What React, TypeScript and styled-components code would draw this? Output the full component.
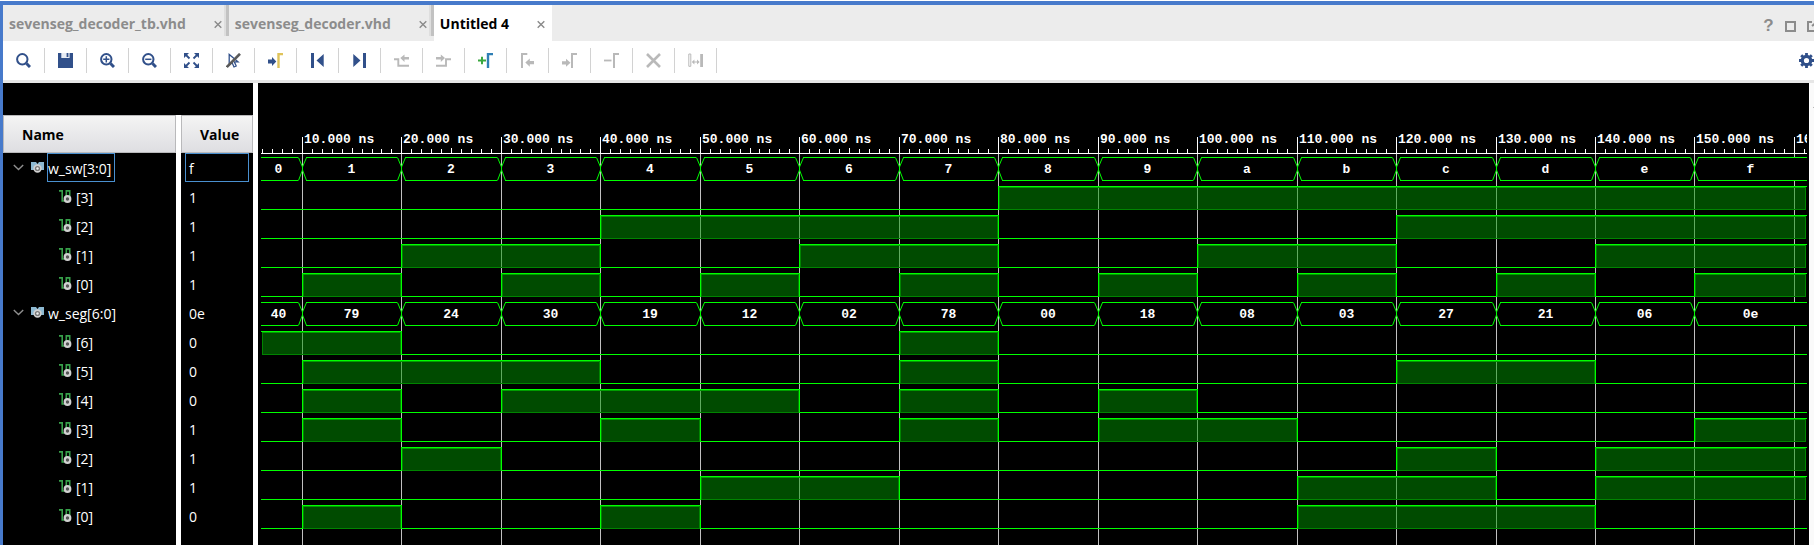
import React, { useLayoutEffect, useRef, useState } from "react";
import styled, { createGlobalStyle } from "styled-components";

const ui = `"Open Sans", "Noto Sans", sans-serif`;
const mono = `"Liberation Mono", monospace`;
const NAVY = "#31508a";
const GREY = "#b9b9b9";

const Global = createGlobalStyle`
  * { box-sizing: border-box; }
  body { margin: 0; background: #fff; font-family: ${ui}; font-size: 14px; }
  button { font: inherit; color: inherit; background: none; border: 0; padding: 0; }
`;

const Window = styled.div`
  display: flex;
  flex-direction: column;
  min-height: 100vh;
  overflow: hidden;
  border-top: 1px solid #fff;
`;
const Frame = styled.div`
  flex: 1;
  display: flex;
  flex-direction: column;
  border-top: 4px solid #477acb;
  border-left: 3px solid #477acb;
`;
const TabBar = styled.div`
  display: flex;
  height: 36px;
  background: #ececec;
  overflow: hidden;
`;
const Tab = styled.div<{ $active?: boolean }>`
  display: flex;
  align-items: center;
  gap: 28px;
  padding-left: 6px;
  background: ${(p) => (p.$active ? "#fff" : "#ececec")};
  color: ${(p) => (p.$active ? "#000" : "#8c8c8c")};
`;
const TabLabel = styled.button`
  font-weight: 700;
  font-size: 14px;
  line-height: 20px;
  padding-top: 2px;
  white-space: nowrap;
`;
const TabEnd = styled.div`
  display: flex;
  align-items: center;
  align-self: stretch;
  gap: 2px;
`;
const IconButton = styled.button`
  display: flex;
  align-items: center;
  justify-content: center;
`;
const CloseButton = styled(IconButton)`
  padding-top: 2px;
`;
const TabDivider = styled.span<{ $hidden?: boolean }>`
  width: 5px;
  height: 31px;
  align-self: flex-start;
  border-left: 2px solid #dedede;
  background: #c2c2c2;
  background-clip: padding-box;
  visibility: ${(p) => (p.$hidden ? "hidden" : "visible")};
`;
const WindowControls = styled.div`
  display: flex;
  align-items: center;
  gap: 11px;
  margin: 6px -4px 0 auto;
  color: #8c8c8c;
`;
const HelpButton = styled(IconButton)`
  font-family: "Liberation Sans", sans-serif;
  font-weight: 700;
  font-size: 17px;
  line-height: 20px;
  width: 11px;
`;
const ToolBar = styled.div`
  display: flex;
  align-items: center;
  height: 42px;
  border-bottom: 3px solid #e6e6e6;
  background: #fff;
`;
const Tool = styled(IconButton)`
  width: 42px;
  height: 25px;
  border-right: 1px solid #d2d2d2;
`;
const SettingsTool = styled(IconButton)`
  margin-left: auto;
`;
const Body = styled.div`
  flex: 1;
  display: flex;
  background: #fff;
`;
const SignalPane = styled.div`
  width: 250px;
  flex: none;
  padding-top: 32px;
  background: #000;
  display: flex;
`;
const SignalTable = styled.table`
  width: 250px;
  height: 100%;
  table-layout: fixed;
  border-spacing: 0;
  color: #fff;
`;
const HeadCell = styled.th<{ $first?: boolean }>`
  height: 38px;
  padding: 0;
  color: #000;
  font-weight: 700;
  text-align: left;
  width: ${(p) => (p.$first ? "178px" : "72px")};
  border-right: ${(p) => (p.$first ? "5px solid #fff" : "0")};
`;
const HeadFace = styled.div`
  height: 38px;
  line-height: 37px;
  border: 1px solid #b9b9bb;
  background: linear-gradient(#f4f4f4, #dedee2);
  padding-left: 18px;
`;
const Cell = styled.td<{ $first?: boolean }>`
  height: 29px;
  padding: 0;
  border-right: ${(p) => (p.$first ? "5px solid #fff" : "0")};
`;
const FillCell = styled(Cell)`
  height: auto;
`;
const NameRow = styled.div<{ $child?: boolean }>`
  display: flex;
  align-items: center;
  gap: 3px;
  padding-left: ${(p) => (p.$child ? "56px" : "10px")};
`;
const Expander = styled(IconButton)`
  margin-right: 4px;
`;
const Text = styled.span<{ $selected?: boolean }>`
  height: 29px;
  line-height: 29px;
  padding-right: 3px;
  border: 1px solid ${(p) => (p.$selected ? "#4a90d0" : "transparent")};
`;
const ValueText = styled(Text)`
  display: block;
  margin: 0 4px;
  padding-left: 3px;
`;
const WavePane = styled.div`
  flex: 1;
  min-width: 0;
  margin-left: 5px;
  padding: 0 2px 0 3px;
  background: #000;
  display: flex;
  overflow: hidden;
`;
const WaveSvg = styled.svg`
  flex: 1;
  width: 100%;
  min-width: 0;
  min-height: 447px;
  text {
    font: 700 13px ${mono};
    fill: #fff;
  }
`;
const ScrollTrack = styled.div`
  width: 5px;
  flex: none;
  overflow: hidden;
  padding: 10px 0 0 3px;
  background: #fafafa;
  border-left: 1px solid #fff;
`;

/* ---------- icons ---------- */
const Ico = ({ children, w = 15, h = 15 }: { children: React.ReactNode; w?: number; h?: number }) => (
  <svg width={w} height={h} viewBox={`0 0 ${w} ${h}`} fill="none" aria-hidden="true">
    {children}
  </svg>
);
const Lens = ({ mark }: { mark?: string }) => (
  <Ico>
    <circle cx="6.3" cy="6.3" r="5.2" stroke={NAVY} strokeWidth="2" />
    <path d="M10.5 10.5L14 14" stroke={NAVY} strokeWidth="3" />
    {mark && <path d={mark} stroke={NAVY} strokeWidth="1.5" />}
  </Ico>
);

const tools: { label: string; icon: React.ReactNode; off?: boolean }[] = [
  { label: "Search", icon: <Lens /> },
  {
    label: "Save",
    icon: (
      <Ico>
        <path d="M0 0H15V15H0Z" fill={NAVY} />
        <path d="M3.3 0H11.6V5H3.3Z" fill="#e8ecf3" />
        <path d="M8.6 0H10.4V4H8.6Z" fill={NAVY} />
      </Ico>
    ),
  },
  { label: "Zoom in", icon: <Lens mark="M3.2 6.3H9.4M6.3 3.2V9.4" /> },
  { label: "Zoom out", icon: <Lens mark="M3.2 6.3H9.4" /> },
  {
    label: "Zoom fit",
    icon: (
      <Ico>
        <path d="M0 0H5L0 5ZM15 0V5L10 0ZM0 15V10L5 15ZM15 15H10L15 10Z" fill={NAVY} />
        <path d="M1 1L5.5 5.5M14 1L9.5 5.5M1 14L5.5 9.5M14 14L9.5 9.5" stroke={NAVY} strokeWidth="1.8" />
      </Ico>
    ),
  },
  {
    label: "Selection off",
    icon: (
      <Ico>
        <path d="M3.2 1.5V12L6 9.6L8 14L10.2 13L8.3 8.8H12Z" stroke={NAVY} strokeWidth="1.3" />
        <path d="M0.8 14L14 0.8" stroke="#5a5a5a" strokeWidth="2.6" />
      </Ico>
    ),
  },
  {
    label: "Go to cursor",
    icon: <Ico><path d="M0 6.5H4V4L8.3 8.5L4 13V10.5H0Z" fill={NAVY} /><path d="M10.5 15V1H15" stroke="#dfc35a" strokeWidth="2.4" /></Ico>,
  },
  { label: "Go to start", icon: <Ico><path d="M1 0H4V15H1ZM13.7 1V14L6.5 7.5Z" fill={NAVY} /></Ico> },
  { label: "Go to end", icon: <Ico><path d="M11 0H14V15H11ZM1.3 1V14L8.5 7.5Z" fill={NAVY} /></Ico> },
  {
    label: "Previous transition", off: true,
    icon: <Ico><path d="M0 6.3H4.3V12.8H15" stroke={GREY} strokeWidth="1.9" /><path d="M6.3 5L10.5 1.4V4H15V6.4H10.5V9Z" fill={GREY} /></Ico>,
  },
  {
    label: "Next transition", off: true,
    icon: <Ico><path d="M0 12.8H10V6.3H15" stroke={GREY} strokeWidth="1.9" /><path d="M9 5L4.8 1.4V4H0V6.4H4.8V9Z" fill={GREY} /></Ico>,
  },
  {
    label: "Add marker",
    icon: <Ico><path d="M0 7.5H8M4 3.7V11.3" stroke="#3aa83f" strokeWidth="2" /><path d="M10 15V1H15" stroke="#2f7fb5" strokeWidth="2.4" /></Ico>,
  },
  {
    label: "Previous marker", off: true,
    icon: <Ico><path d="M2 15V1H7.3" stroke={GREY} strokeWidth="2" /><path d="M5.3 9.6L9.8 5.5V8H14V11.2H9.8V13.7Z" fill={GREY} /></Ico>,
  },
  {
    label: "Next marker", off: true,
    icon: <Ico><path d="M10 15V1H15" stroke={GREY} strokeWidth="2" /><path d="M8.5 9.8L4 5.8V8.2H0V11.4H4V13.8Z" fill={GREY} /></Ico>,
  },
  {
    label: "Delete marker", off: true,
    icon: <Ico><path d="M0 7.5H7.5" stroke={GREY} strokeWidth="1.8" /><path d="M10 15V1H15" stroke={GREY} strokeWidth="2" /></Ico>,
  },
  { label: "Remove", off: true, icon: <Ico><path d="M1 1L14 14M14 1L1 14" stroke={GREY} strokeWidth="2.6" /></Ico> },
  {
    label: "Swap markers", off: true,
    icon: (
      <Ico>
        <path d="M0.8 1H2.8V13.3H0.8Z" stroke={GREY} />
        <path d="M12.2 1H15V14H12.2ZM3.8 9L6.4 6.6V8.5H9V6.6L11.6 9L9 11.4V9.5H6.4V11.4Z" fill={GREY} />
      </Ico>
    ),
  },
];

const CloseIcon = () => (
  <Ico w={8} h={9}><path d="M0.7 1.2L7.3 7.8M7.3 1.2L0.7 7.8" stroke="#8a8a8a" strokeWidth="1.4" /></Ico>
);
const Gear = () => (
  <Ico>
    <circle cx="7.5" cy="7.5" r="4.2" stroke={NAVY} strokeWidth="3.2" />
    {[0, 45, 90, 135].map((a) => (
      <path key={a} d="M7.5 0V3M7.5 12V15" stroke={NAVY} strokeWidth="2.8" transform={`rotate(${a} 7.5 7.5)`} />
    ))}
  </Ico>
);
const Chevron = () => (
  <Ico w={11} h={7}><path d="M0.8 1L5.5 5.6L10.2 1" stroke="#8f8f8f" strokeWidth="1.4" /></Ico>
);
const BusIcon = () => (
  <Ico w={13} h={13}>
    <path d="M0 1H5L6.5 3L8 1H13V9H0Z" fill="#8db9d2" />
    <circle cx="6.5" cy="7.5" r="3.4" fill="#777" stroke="#d0d0d0" strokeWidth="1.6" />
    <circle cx="6.5" cy="7.5" r="1.2" fill="#efefef" />
  </Ico>
);
const BitIcon = () => (
  <Ico w={13} h={13}>
    <path d="M0 0.9H3.2V11H5.5M7.3 7V0.9H10.7V6" stroke="#37a04a" strokeWidth="1.6" />
    <circle cx="8.5" cy="9" r="2.8" fill="#555" stroke="#d2d2d2" strokeWidth="2.2" />
  </Ico>
);

/* ---------- signals ---------- */
type Signal = { name: string; value: string; bus?: boolean; samples: number[] };
const sw = Array.from({ length: 16 }, (_, i) => i);
const seg = [0x40, 0x79, 0x24, 0x30, 0x19, 0x12, 0x02, 0x78, 0x00, 0x18, 0x08, 0x03, 0x27, 0x21, 0x06, 0x0e];

const bits = (samples: number[], count: number): Signal[] =>
  Array.from({ length: count }, (_, i) => {
    const bit = count - 1 - i;
    const values = samples.map((v) => (v >> bit) & 1);
    return { name: `[${bit}]`, value: String(values[values.length - 1]), samples: values };
  });

const signals: Signal[] = [
  { name: "w_sw[3:0]", value: "f", bus: true, samples: sw },
  ...bits(sw, 4),
  { name: "w_seg[6:0]", value: "0e", bus: true, samples: seg },
  ...bits(seg, 7),
];

/* ---------- waveform ---------- */
const ORIGIN = -58.07; // x of 0 ns, left of the visible range
const STEP = 99.47; // pixels per 10 ns
const TOP = 70;
const ROW = 29;
const edge = (i: number) => Math.floor(ORIGIN + i * STEP);

function BusWave({ signal, y, width }: { signal: Signal; y: number; width: number }) {
  const digits = signal.value.length;
  const top = y + 4;
  const bottom = y + 27;
  return (
    <g>
      {signal.samples.map((v, i) => {
        const first = i === 0;
        const last = i === signal.samples.length - 1;
        const a = first ? -6 : edge(i);
        const b = last ? width : edge(i + 1);
        const x1 = first ? 0 : a + 4;
        const x2 = last ? b : b - 4;
        const from = first ? 0 : a + 1;
        return (
          <g key={i}>
            <rect x={from} y={top} width={Math.max(0, b - from)} height="24" fill="#000" />
            <path d={`M${x1} ${top + 0.5}H${x2}M${x1} ${bottom + 0.5}H${x2}`} stroke="#0f0" />
            <text x={(a + b) / 2} y={y + 20} textAnchor="middle">
              {v.toString(16).padStart(digits, "0")}
            </text>
          </g>
        );
      })}
      {signal.samples.slice(1).map((_, i) => {
        const x = edge(i + 1) + 0.5;
        return (
          <path
            key={i}
            d={`M${x - 4} ${top + 0.5}L${x} ${top + 10}V${top + 13}L${x + 4} ${bottom + 0.5}M${x + 4} ${top + 0.5}L${x} ${top + 10}M${x} ${top + 13}L${x - 4} ${bottom + 0.5}`}
            stroke="#0f0"
            fill="none"
          />
        );
      })}
    </g>
  );
}

function BitWave({ signal, y, width }: { signal: Signal; y: number; width: number }) {
  const hi = y + 4.5;
  const lo = y + 27.5;
  const runs: { v: number; a: number; b: number; start: number }[] = [];
  signal.samples.forEach((v, i) => {
    const b = i === signal.samples.length - 1 ? width : edge(i + 1);
    const prev = runs[runs.length - 1];
    if (prev && prev.v === v) prev.b = b;
    else runs.push({ v, a: i === 0 ? 0 : edge(i), b, start: i });
  });
  return (
    <g shapeRendering="crispEdges">
      {runs.map((r) => {
        const end = r.b === width ? width - 2 : r.b - 1;
        const begin = r.start === 0 ? 1 : r.a + 1;
        const span = Math.max(0, end - begin);
        return (
          <g key={r.start}>
            {r.v === 1 && (
              <>
                <rect x={begin} y={y + 5} width={span} height="23" fill="rgba(0,150,0,.5)" />
                <rect x={begin + 0.5} y={y + 5.5} width={span} height="22" fill="none" stroke="#008400" />
                <path d={`M${begin} ${y + 5.5}H${end}`} stroke="#009e00" />
              </>
            )}
            <path d={`M${r.a} ${r.v ? hi : lo}H${r.b}`} stroke="#0f0" />
            {r.start > 0 && <path d={`M${r.a + 0.5} ${y + 4}V${y + 28}`} stroke="#0f0" />}
          </g>
        );
      })}
    </g>
  );
}

function Waveform() {
  const ref = useRef<HTMLDivElement>(null);
  const [width, setWidth] = useState(1200);
  useLayoutEffect(() => {
    const el = ref.current;
    if (!el) return;
    const measure = () => setWidth(Math.max(0, el.clientWidth - 5));
    measure();
    const watcher = new ResizeObserver(measure);
    watcher.observe(el);
    return () => watcher.disconnect();
  }, []);

  const ticks: number[] = [];
  for (let n = 6; ORIGIN + (n * STEP) / 10 < width; n++) ticks.push(n);
  const majors = ticks.filter((n) => n % 10 === 0);

  return (
    <WavePane ref={ref}>
      <WaveSvg role="img" aria-label="Waveform">
        <g shapeRendering="crispEdges">
          {majors.map((n) => {
            const x = edge(n / 10) + 0.5;
            return (
              <g key={n}>
                <line x1={x} x2={x} y1={TOP} y2="100%" stroke="#c0c0c0" />
                <line x1={x} x2={x} y1={TOP - 16} y2={TOP} stroke="#fff" />
              </g>
            );
          })}
          {ticks.filter((n) => n % 10).map((n) => {
            const x = Math.floor(ORIGIN + (n * STEP) / 10) + 0.5;
            return <line key={n} x1={x} x2={x} y1={TOP - (n % 5 ? 4 : 5)} y2={TOP} stroke="#fff" />;
          })}
          <line x1="0" x2={width} y1={TOP + 0.5} y2={TOP + 0.5} stroke="#fff" />
        </g>
        {majors.map((n) => (
          <text key={n} x={edge(n / 10) + 2} y={TOP - 10}>{`${n}.000 ns`}</text>
        ))}
        {signals.map((s, i) =>
          s.bus ? (
            <BusWave key={i} signal={s} y={TOP + i * ROW} width={width} />
          ) : (
            <BitWave key={i} signal={s} y={TOP + i * ROW} width={width} />
          )
        )}
      </WaveSvg>
    </WavePane>
  );
}

const tabs = ["sevenseg_decoder_tb.vhd", "sevenseg_decoder.vhd", "Untitled 4"];

export default function App() {
  return (
    <Window>
      <Global />
      <Frame>
        <TabBar>
          {tabs.map((t, i) => (
            <Tab key={t} $active={i === 2}>
              <TabLabel>{t}</TabLabel>
              <TabEnd>
                <CloseButton aria-label={`Close ${t}`}><CloseIcon /></CloseButton>
                <TabDivider $hidden={i === 2} />
              </TabEnd>
            </Tab>
          ))}
          <WindowControls>
            <HelpButton aria-label="Help">?</HelpButton>
            <IconButton aria-label="Maximize">
              <Ico w={11} h={11}><path d="M1 1H10V10H1Z" stroke="#8c8c8c" strokeWidth="2" /></Ico>
            </IconButton>
            <IconButton aria-label="Float">
              <Ico w={11} h={11}><path d="M5 1H1V10H10V7M5 5L10 1" stroke="#8c8c8c" strokeWidth="2" /></Ico>
            </IconButton>
          </WindowControls>
        </TabBar>
        <ToolBar>
          {tools.map((t) => (
            <Tool key={t.label} aria-label={t.label} disabled={t.off}>{t.icon}</Tool>
          ))}
          <SettingsTool aria-label="Settings"><Gear /></SettingsTool>
        </ToolBar>
        <Body>
          <SignalPane>
            <SignalTable>
              <thead>
                <tr>
                  <HeadCell $first><HeadFace>Name</HeadFace></HeadCell>
                  <HeadCell><HeadFace>Value</HeadFace></HeadCell>
                </tr>
              </thead>
              <tbody>
                {signals.map((s, i) => (
                  <tr key={i}>
                    <Cell $first>
                      <NameRow $child={!s.bus}>
                        {s.bus && <Expander aria-label={`Collapse ${s.name}`}><Chevron /></Expander>}
                        {s.bus ? <BusIcon /> : <BitIcon />}
                        <Text $selected={i === 0}>{s.name}</Text>
                      </NameRow>
                    </Cell>
                    <Cell><ValueText $selected={i === 0}>{s.value}</ValueText></Cell>
                  </tr>
                ))}
                <tr aria-hidden="true">
                  <FillCell $first />
                  <FillCell />
                </tr>
              </tbody>
            </SignalTable>
          </SignalPane>
          <Waveform />
          <ScrollTrack>
            <Ico w={8} h={5}><path d="M0 5L4 0L8 5Z" fill="#8c8c8c" /></Ico>
          </ScrollTrack>
        </Body>
      </Frame>
    </Window>
  );
}
